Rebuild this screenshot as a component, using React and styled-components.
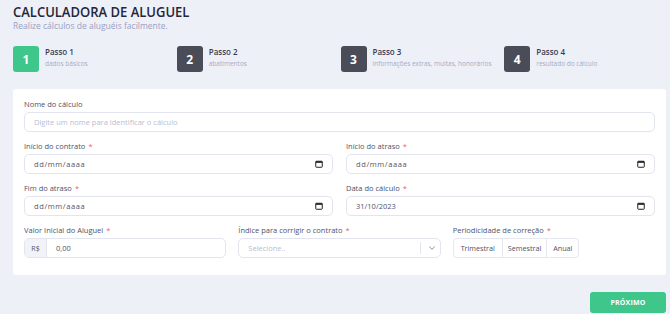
import React from 'react';
import styled, { createGlobalStyle } from 'styled-components';

const GlobalStyle = createGlobalStyle`
  body {
    margin: 0;
    background: #eef0f7;
    font-family: "Open Sans", "Liberation Sans", sans-serif;
    color: #3a3d52;
  }
`;

const Page = styled.div`
  width: 670px;
  height: 314px;
  box-sizing: border-box;
  padding: 0 4px 0 13px;
  display: flex;
  flex-direction: column;
  overflow: hidden;
`;

const Title = styled.h1`
  margin: 0;
  padding-top: 3px;
  font-size: 13px;
  line-height: 17px;
  font-weight: 600;
  color: #24263a;
  transform-origin: left center;
  transform: scaleY(1.12);
`;

const Subtitle = styled.p`
  margin: 0;
  font-size: 8.5px;
  line-height: 11px;
  color: #9aa0c2;
`;

const Steps = styled.div`
  display: grid;
  grid-template-columns: repeat(4, 1fr);
  margin-top: 15px;
  margin-right: -2px;
`;

const Step = styled.div`
  display: flex;
  align-items: center;
  gap: 6px;
`;

const StepBox = styled.div`
  width: 26px;
  height: 26px;
  border-radius: 3px;
  background: ${p => (p.active ? '#3ec68b' : '#4a4c57')};
  color: #fff;
  font-weight: 700;
  font-size: 12px;
  display: flex;
  align-items: center;
  justify-content: center;
`;

const StepText = styled.div`
  display: flex;
  flex-direction: column;
  gap: 2px;
  margin-top: -5px;
`;

const StepName = styled.span`
  font-size: 8px;
  font-weight: 600;
  color: #3a3d52;
`;

const StepSub = styled.span`
  font-size: 6.5px;
  color: #a6abc6;
`;

const Card = styled.div`
  margin-top: 17px;
  background: #fff;
  border-radius: 3px;
  padding: 9px 11px 17px;
  display: flex;
  flex-direction: column;
  gap: 8px;
`;

const Row = styled.div`
  display: grid;
  grid-template-columns: repeat(${p => p.cols}, 1fr);
  column-gap: ${p => (p.cols === 3 ? 12 : 13)}px;
`;

const Field = styled.div`
  display: flex;
  flex-direction: column;
  min-width: 0;
`;

const Label = styled.div`
  font-size: 7.5px;
  line-height: 12px;
  margin-bottom: 2px;
  color: #4e526a;
`;

const Req = styled.span`
  color: #f0606d;
  margin-left: 3px;
`;

const Box = styled.div`
  height: 20px;
  box-sizing: border-box;
  border: 1px solid #e2e5ef;
  border-radius: 5px;
  display: flex;
  align-items: center;
  font-size: 7.5px;
  color: ${p => (p.muted ? '#b9bdd0' : '#50536a')};
  padding: ${p => (p.flush ? '0' : p.tight ? '0 4px 0 9px' : '0 9px')};
  overflow: hidden;
`;

const Grow = styled.span`
  flex: 1;
  letter-spacing: ${p => (p.spaced ? '0.6px' : '0')};
`;

const Addon = styled.span`
  width: 21px;
  align-self: stretch;
  background: #f1f3f8;
  border-right: 1px solid #e2e5ef;
  display: flex;
  align-items: center;
  justify-content: center;
  font-size: 7px;
  color: #50536a;
`;

const AddonValue = styled.span`
  padding-left: 9px;
  flex: 1;
`;

const Divider = styled.span`
  width: 1px;
  height: 12px;
  background: #e2e5ef;
  margin: 0 7px 0 0;
`;

const Segments = styled.div`
  display: flex;
`;

const Segment = styled.button`
  height: 20px;
  padding: 0 ${p => p.pad}px;
  background: #fff;
  border: 1px solid #e6e8f0;
  margin-left: -1px;
  border-radius: ${p => (p.first ? '4px 0 0 4px' : p.last ? '0 4px 4px 0' : '0')};
  font-family: inherit;
  font-size: 7.2px;
  color: #4e526a;
  &:first-child { margin-left: 0; }
`;

const Footer = styled.div`
  display: flex;
  justify-content: flex-end;
  margin-top: 17px;
`;

const NextButton = styled.button`
  width: 76px;
  height: 21px;
  border: none;
  border-radius: 3px;
  background: #3ec68b;
  color: #fff;
  font-family: inherit;
  font-weight: 700;
  font-size: 7px;
  letter-spacing: 0.2px;
`;

const CalendarIcon = () => (
  <svg width="8" height="8" viewBox="0 0 8 8">
    <rect x="0.75" y="1.25" width="6.5" height="6" rx="0.6" fill="none" stroke="#222" strokeWidth="1" />
    <rect x="0.75" y="1.25" width="6.5" height="1.6" fill="#222" />
  </svg>
);

const Chevron = () => (
  <svg width="8" height="6" viewBox="0 0 8 6">
    <path d="M1.2 1.6 L4 4.3 L6.8 1.6" fill="none" stroke="#8a8ea3" strokeWidth="1" />
  </svg>
);

const DateField = ({ label, value }) => (
  <Field>
    <Label>{label}<Req>*</Req></Label>
    <Box>
      <Grow spaced={!value}>{value || 'dd/mm/aaaa'}</Grow>
      <CalendarIcon />
    </Box>
  </Field>
);

const steps = [
  { n: 1, sub: 'dados básicos', active: true },
  { n: 2, sub: 'abatimentos' },
  { n: 3, sub: 'informações extras, multas, honorários' },
  { n: 4, sub: 'resultado do cálculo' },
];

export default function App() {
  return (
    <>
      <GlobalStyle />
      <Page>
        <Title>CALCULADORA DE ALUGUEL</Title>
        <Subtitle>Realize cálculos de aluguéis facilmente.</Subtitle>

        <Steps>
          {steps.map(s => (
            <Step key={s.n}>
              <StepBox active={s.active}>{s.n}</StepBox>
              <StepText>
                <StepName>Passo {s.n}</StepName>
                <StepSub>{s.sub}</StepSub>
              </StepText>
            </Step>
          ))}
        </Steps>

        <Card>
          <Row cols={1}>
            <Field>
              <Label>Nome do cálculo</Label>
              <Box muted>Digite um nome para identificar o cálculo</Box>
            </Field>
          </Row>
          <Row cols={2}>
            <DateField label="Início do contrato" />
            <DateField label="Início do atraso" />
          </Row>
          <Row cols={2}>
            <DateField label="Fim do atraso" />
            <DateField label="Data do cálculo" value="31/10/2023" />
          </Row>
          <Row cols={3}>
            <Field>
              <Label>Valor Inicial do Aluguel<Req>*</Req></Label>
              <Box flush>
                <Addon>R$</Addon>
                <AddonValue>0,00</AddonValue>
              </Box>
            </Field>
            <Field>
              <Label>Índice para corrigir o contrato<Req>*</Req></Label>
              <Box muted tight>
                <Grow>Selecione..</Grow>
                <Divider />
                <Chevron />
              </Box>
            </Field>
            <Field>
              <Label>Periodicidade de correção<Req>*</Req></Label>
              <Segments>
                <Segment first pad={7}>Trimestral</Segment>
                <Segment pad={5}>Semestral</Segment>
                <Segment last pad={6}>Anual</Segment>
              </Segments>
            </Field>
          </Row>
        </Card>

        <Footer>
          <NextButton>PRÓXIMO</NextButton>
        </Footer>
      </Page>
    </>
  );
}
